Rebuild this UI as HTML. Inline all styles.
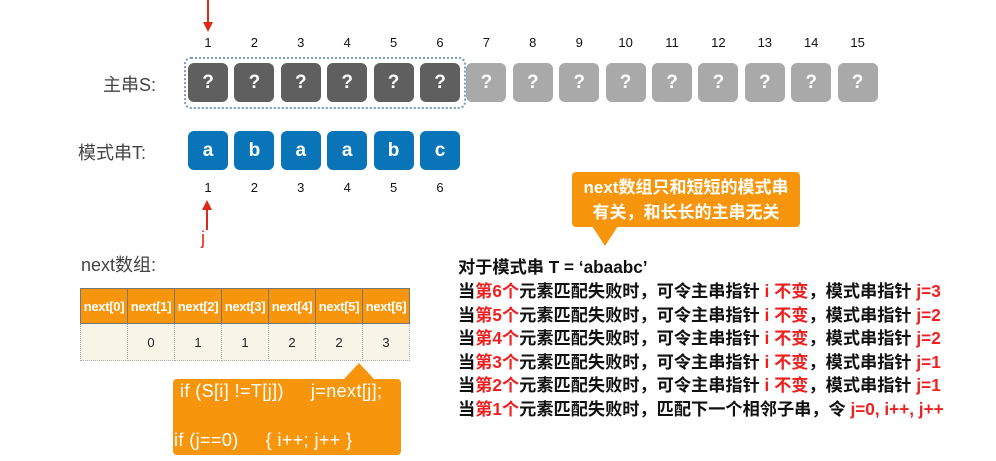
<!DOCTYPE html>
<html><head><meta charset="utf-8"><style>
body{margin:0;width:996px;height:461px;background:#fff;position:relative;overflow:hidden;font-family:"Liberation Sans","Noto Sans CJK SC",sans-serif}
.a{position:absolute}
.n{position:absolute;font-size:13px;color:#111;width:40px;text-align:center}
.b{position:absolute;width:40px;height:39px;border-radius:6px;color:#fff;font-weight:bold;font-size:19px;text-align:center;line-height:39px}
.lbl{position:absolute;font-size:18px;color:#444;margin-bottom:2px}
table{border-collapse:collapse;position:absolute;left:80px;top:288px;width:330px}
td{border:1px dotted #aaa;text-align:center;font-size:13px;width:47px;padding:0}
tr.h td{background:#f7950c;color:#fff;font-weight:bold;height:34px;border:1px solid #777;font-size:13px;letter-spacing:-0.3px}
tr.v td{background:#f8f5e8;height:36px;color:#222}
.t{position:absolute;left:458px;font-size:17.2px;font-weight:bold;color:#111;white-space:nowrap}
.r{color:#f02020}
</style></head><body>
<div class="a" style="left:207px;top:0;width:2px;height:24px;background:#e02818"></div>
<div class="a" style="left:203px;top:22px;border-left:5px solid transparent;border-right:5px solid transparent;border-top:10px solid #e02818"></div>
<div class="a" style="left:184px;top:57px;width:278px;height:48px;border:2px dotted #7a9cc8;border-radius:7px"></div>
<div class="lbl" style="left:103px;top:71px">主串S:</div>
<div class="lbl" style="left:78px;top:139px">模式串T:</div>
<div id="s"></div>
<table><tr class="h"><td>next[0]</td><td>next[1]</td><td>next[2]</td><td>next[3]</td><td>next[4]</td><td>next[5]</td><td>next[6]</td></tr>
<tr class="v"><td></td><td>0</td><td>1</td><td>1</td><td>2</td><td>2</td><td>3</td></tr></table>
<div class="a" style="left:206px;top:208px;width:2px;height:22px;background:#e02818"></div>
<div class="a" style="left:202px;top:200px;border-left:5px solid transparent;border-right:5px solid transparent;border-bottom:10px solid #e02818"></div>
<div class="a" style="left:201px;top:228px;color:#e02818;font-size:18px">j</div>
<div class="lbl" style="left:81px;top:251px">next数组:</div>
<div class="a" style="left:173px;top:379px;width:228px;height:76px;background:#f7950c;border-radius:4px"></div>
<div class="a" style="left:343px;top:363px;border-left:16px solid transparent;border-right:16px solid transparent;border-bottom:17px solid #f7950c"></div>
<div class="a" style="left:180px;top:381px;color:#fff;font-size:18px;letter-spacing:0.4px;white-space:pre">if (S[i] !=T[j])     j=next[j];</div>
<div class="a" style="left:174px;top:430px;color:#fff;font-size:18px;letter-spacing:0.4px;white-space:pre">if (j==0)     { i++; j++ }</div>
<div class="a" style="left:572px;top:172px;width:228px;height:55px;background:#f7950c;border-radius:4px;color:#fff;font-size:17px;font-weight:bold;text-align:center;line-height:25px;padding-top:3px;box-sizing:border-box">next数组只和短短的模式串<br>有关，和长长的主串无关</div>
<div class="a" style="left:592px;top:226px;border-left:13px solid transparent;border-right:13px solid transparent;border-top:20px solid #f7950c"></div>
<div class="t" style="top:253px">对于模式串 T = ‘abaabc’</div>
<div class="t" style="top:277px">当<span class="r">第6个</span>元素匹配失败时，可令主串指针 <span class="r">i 不变</span>，模式串指针 <span class="r">j=3</span></div>
<div class="t" style="top:301px">当<span class="r">第5个</span>元素匹配失败时，可令主串指针 <span class="r">i 不变</span>，模式串指针 <span class="r">j=2</span></div>
<div class="t" style="top:324px">当<span class="r">第4个</span>元素匹配失败时，可令主串指针 <span class="r">i 不变</span>，模式串指针 <span class="r">j=2</span></div>
<div class="t" style="top:348px">当<span class="r">第3个</span>元素匹配失败时，可令主串指针 <span class="r">i 不变</span>，模式串指针 <span class="r">j=1</span></div>
<div class="t" style="top:371px">当<span class="r">第2个</span>元素匹配失败时，可令主串指针 <span class="r">i 不变</span>，模式串指针 <span class="r">j=1</span></div>
<div class="t" style="top:395px">当<span class="r">第1个</span>元素匹配失败时，匹配下一个相邻子串，令 <span class="r">j=0, i++, j++</span></div>
<script>
var h='';var t='abaabc';
for(var i=0;i<15;i++){var x=188+i*46.4;
h+='<div class="n" style="left:'+x+'px;top:35px">'+(i+1)+'</div>';
h+='<div class="b" style="left:'+x+'px;top:63px;background:'+(i<6?'#5f5f5f':'#a9a9a9')+'">?</div>';
if(i<6){h+='<div class="b" style="left:'+x+'px;top:131px;background:#0a74b8">'+t[i]+'</div>';
h+='<div class="n" style="left:'+x+'px;top:180px">'+(i+1)+'</div>';}}
document.getElementById('s').innerHTML=h;
</script>
</body></html>
